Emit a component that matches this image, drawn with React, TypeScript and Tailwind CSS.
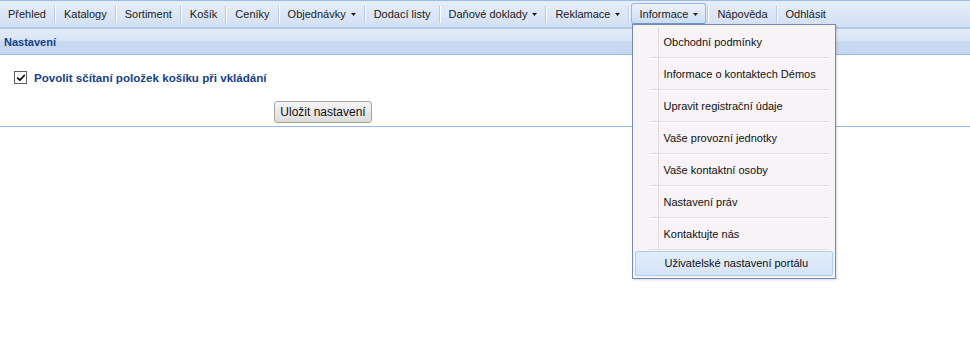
import { Check } from "lucide-react";

const menu = [
  { label: "Přehled" },
  { label: "Katalogy" },
  { label: "Sortiment" },
  { label: "Košík" },
  { label: "Ceníky" },
  { label: "Objednávky", arrow: true },
  { label: "Dodací listy" },
  { label: "Daňové doklady", arrow: true },
  { label: "Reklamace", arrow: true },
  { label: "Informace", arrow: true, active: true },
  { label: "Nápověda" },
  { label: "Odhlásit" },
];

const infoItems = [
  "Obchodní podmínky",
  "Informace o kontaktech Démos",
  "Upravit registrační údaje",
  "Vaše provozní jednotky",
  "Vaše kontaktní osoby",
  "Nastavení práv",
  "Kontaktujte nás",
  "Uživatelské nastavení portálu",
];

const Arrow = () => (
  <svg width="5" height="3" viewBox="0 0 5 3" className="ml-[5px]">
    <path d="M0 0h5L2.5 3z" fill="#222" />
  </svg>
);

const InfoDropdown = () => (
  <div className="absolute left-[2px] top-[21px] z-10 w-[204px] border border-[#718bb7] bg-[#f7f3f6] py-[2px] shadow-[1px_1px_2px_rgba(0,0,0,0.15)]">
    {infoItems.map((item, i) => {
      const last = i === infoItems.length - 1;
      return (
        <div key={item} className="relative">
          {last ? (
            <div className="mx-[2px] flex h-[25px] items-center rounded-[2px] border border-[#aaccf6] bg-gradient-to-b from-[#e3eefc] to-[#d3e3f8] pl-[28px] text-[#111]">
              {item}
            </div>
          ) : (
            <>
              <div className="flex h-[30px] items-center pl-[30px] text-[#111]">{item}</div>
              <div className="ml-[17px] mr-[6px] h-[2px] border-b border-t border-b-white border-t-[#e0dcdf]" />
            </>
          )}
          {!last && <div className="absolute left-[25px] top-0 h-full w-px bg-[#e0dcdf]" />}
        </div>
      );
    })}
  </div>
);

export default function App() {
  return (
    <div className="min-h-[349px] w-[970px] bg-white font-['Liberation_Sans',Arial,sans-serif] text-[11px] text-[#222]">
      <div className="h-px bg-[#99bbe8]" />
      <nav className="flex h-[28px] items-start border-b-2 border-[#b4c7e3] bg-gradient-to-b from-[#e6eefa] to-[#d2e0f4] pt-[2px]">
        {menu.map((m, i) => (
          <div key={m.label} className="flex h-[21px] items-center">
            {i > 0 && <div className="mt-[1px] h-[17px] w-[2px] border-l border-r border-l-[#b9cbe6] border-r-white" />}
            <div className="relative">
              <div
                className={
                  m.active
                    ? "mx-[1px] flex h-[21px] items-center rounded-[3px] border border-[#9eb7dd] border-b-[#6d96d2] bg-gradient-to-b from-[#edf3fc] to-[#cbdcf4] px-[7px] pt-[1px]"
                    : "flex h-[21px] items-center px-[8px] pt-[1px]"
                }
              >
                {m.label}
                {m.arrow && <Arrow />}
              </div>
              {m.active && <InfoDropdown />}
            </div>
          </div>
        ))}
      </nav>
      <div className="flex h-[26px] items-center border-b border-[#99bbe8] bg-[linear-gradient(#e2ebf8_0%,#d9e5f6_45%,#c8d9f1_50%,#c5d8f1_100%)] px-[4px] pt-[1px] font-bold text-[#15428b]">
        Nastavení
      </div>
      <div className="border-b border-[#99bbe8] pb-[3px]">
        <label className="flex items-center pl-[14px] pt-[14px]">
          <span className="flex h-[13px] w-[13px] items-center justify-center border border-[#5e5e5e] bg-white">
            <Check className="h-[10px] w-[10px] text-black" strokeWidth={4} />
          </span>
          <span className="ml-[7px] text-[11.6px] font-bold text-[#15428b]">Povolit sčítaní položek košíku při vkládání</span>
        </label>
        <div className="mt-[15px] pl-[274px]">
          <button className="h-[22px] w-[98px] rounded-[3px] border border-[#a6a6a6] bg-gradient-to-b from-[#f6f6f6] to-[#dcdcdc] text-[12px] text-[#111]">
            Uložit nastavení
          </button>
        </div>
      </div>
    </div>
  );
}
